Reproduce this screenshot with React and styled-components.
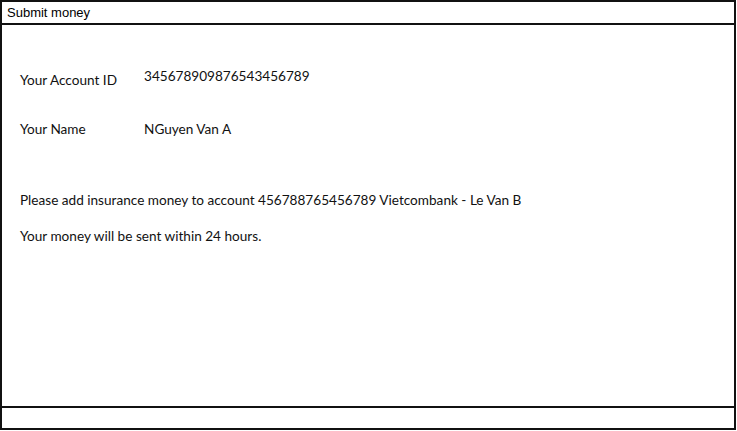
import React from 'react';
import styled, { createGlobalStyle } from 'styled-components';

const GlobalStyle = createGlobalStyle`
  html, body {
    margin: 0;
    padding: 0;
    background: #fff;
  }
  body {
    font-family: "Liberation Sans", Arial, sans-serif;
    color: #000;
  }
`;

export default function App() {
  return (
    <>
      <GlobalStyle />
      <Window>
        <TitleBar>Submit money</TitleBar>
        <Body>
          <Field $top={45}>
            <Label>Your Account ID</Label>
            <Value $lift={4}>345678909876543456789</Value>
          </Field>
          <Field $top={29}>
            <Label>Your Name</Label>
            <Value>NGuyen Van A</Value>
          </Field>
          <Note $top={52}>
            Please add insurance money to account 456788765456789 Vietcombank - Le Van B
          </Note>
          <Note $top={18}>Your money will be sent within 24 hours.</Note>
        </Body>
        <Footer />
      </Window>
    </>
  );
}

const Window = styled.div`
  box-sizing: border-box;
  width: 736px;
  height: 430px;
  border: 2px solid #111;
  display: flex;
  flex-direction: column;
`;

const TitleBar = styled.div`
  height: 21px;
  border-bottom: 2px solid #111;
  padding-left: 5px;
  font-family: "Liberation Sans", Arial, sans-serif;
  font-size: 13px;
  line-height: 22px;
`;

const Body = styled.div`
  flex: 1;
  padding: 0 18px;
  font-family: Lato, "Noto Sans", sans-serif;
  font-size: 13.6px;
  color: #111;
`;

const Field = styled.div`
  display: flex;
  align-items: center;
  margin-top: ${(p) => p.$top}px;
  height: 20px;
`;

const Label = styled.div`
  width: 124px;
`;

const Value = styled.div`
  position: relative;
  top: -${(p) => p.$lift || 0}px;
`;

const Note = styled.div`
  margin-top: ${(p) => p.$top}px;
  line-height: 18px;
`;

const Footer = styled.div`
  height: 20px;
  border-top: 2px solid #111;
`;
